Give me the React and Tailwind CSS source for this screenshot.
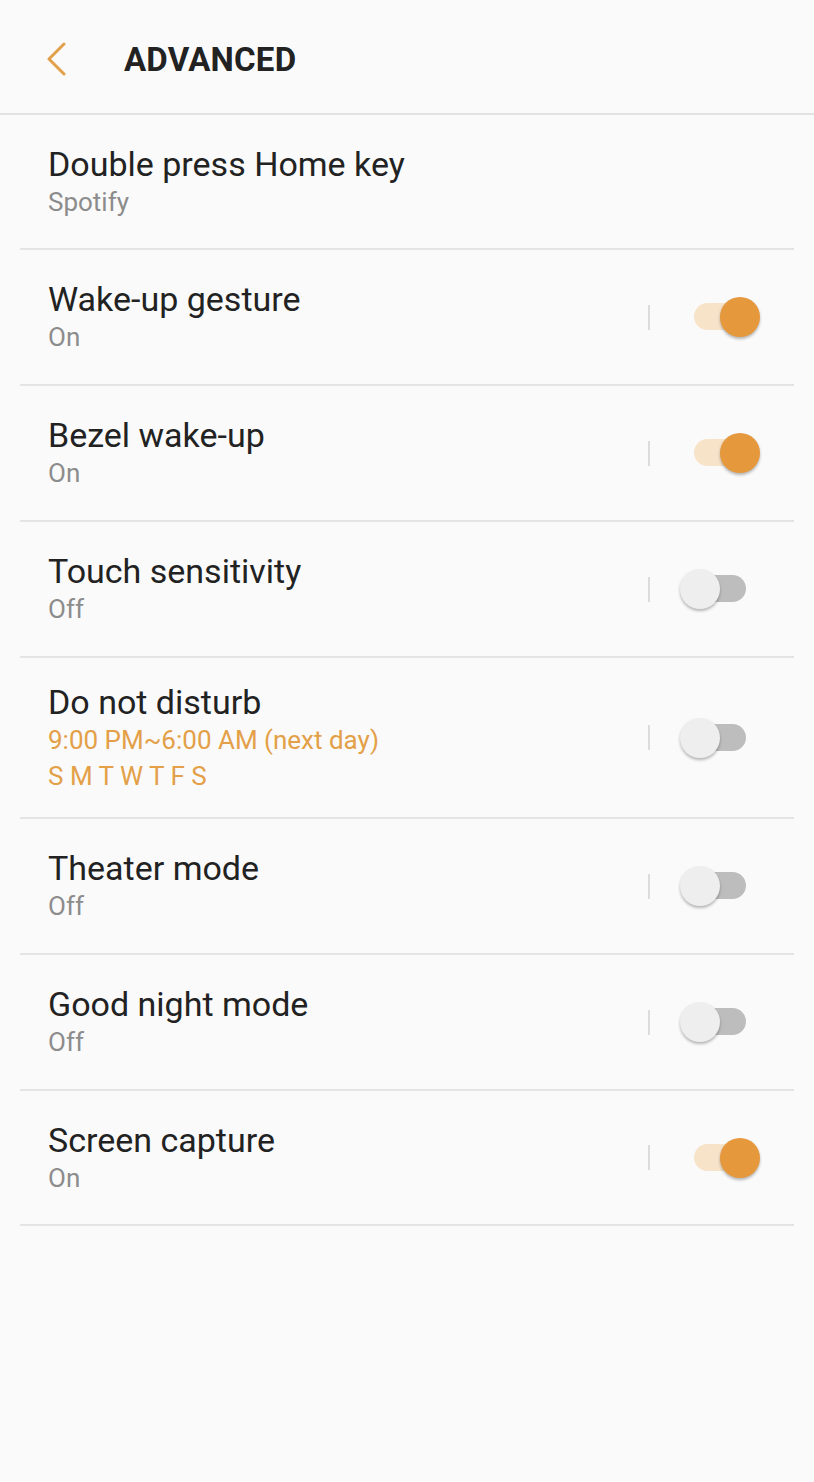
import React from 'react';

const settings = [
  { title: 'Double press Home key', sub: ['Spotify'], h: 'h-[135px]' },
  { title: 'Wake-up gesture', sub: ['On'], toggle: true, on: true },
  { title: 'Bezel wake-up', sub: ['On'], toggle: true, on: true },
  { title: 'Touch sensitivity', sub: ['Off'], toggle: true, on: false },
  { title: 'Do not disturb', sub: ['9:00 PM~6:00 AM (next day)', 'S M T W T F S'], accent: true, toggle: true, on: false, h: 'h-[161px]' },
  { title: 'Theater mode', sub: ['Off'], toggle: true, on: false },
  { title: 'Good night mode', sub: ['Off'], toggle: true, on: false },
  { title: 'Screen capture', sub: ['On'], toggle: true, on: true, h: 'h-[135px]' },
];

function Toggle({ on }) {
  return (
    <div className="relative w-[80px] h-[42px]">
      <div
        className={`absolute left-[14px] right-[14px] top-[7px] h-[27px] rounded-full ${
          on ? 'bg-[#f6e3c8]' : 'bg-[#bdbdbd]'
        }`}
      />
      <div
        className={`absolute top-[1px] w-[40px] h-[40px] rounded-full shadow-[0_2px_3px_rgba(0,0,0,0.28)] ${
          on ? 'right-0 bg-[#e5983c]' : 'left-0 bg-[#eeeeee]'
        }`}
      />
    </div>
  );
}

export default function App() {
  return (
    <div className="min-h-[1482px] bg-[#fafafa] font-['Roboto','Liberation_Sans',sans-serif]">
      {/* Header */}
      <div className="h-[115px] flex items-center pt-[5px] border-b-2 border-[#e2e2e2]">
        <div className="w-[124px] flex pl-[45px]">
          <svg width="24" height="34" viewBox="0 0 24 34" fill="none">
            <path d="M19 2 L4 17 L19 32" stroke="#e2a04a" strokeWidth="3" strokeLinecap="round" strokeLinejoin="round" />
          </svg>
        </div>
        <h1 className="text-[33px] font-bold text-[#222222] tracking-[0.2px] leading-none">ADVANCED</h1>
      </div>

      {/* List */}
      <div className="mx-5">
        {settings.map((s) => (
          <div
            key={s.title}
            className={`${s.h || 'h-[136px]'} flex items-center border-b-2 border-[#e4e4e4] pl-7 pr-[34px]`}
          >
            <div className="flex-1 flex flex-col">
              <div className="text-[34px] leading-[40px] text-[#222222]">{s.title}</div>
              {s.sub.map((line) => (
                <div
                  key={line}
                  className={`text-[26px] leading-[36px] ${s.accent ? 'text-[#e3a048]' : 'text-[#8c8c8c]'}`}
                >
                  {line}
                </div>
              ))}
            </div>
            {s.toggle && (
              <div className="flex items-center">
                <div className="w-[2px] h-[25px] bg-[#dcdcdc] mr-[30px]" />
                <Toggle on={s.on} />
              </div>
            )}
          </div>
        ))}
      </div>
    </div>
  );
}
